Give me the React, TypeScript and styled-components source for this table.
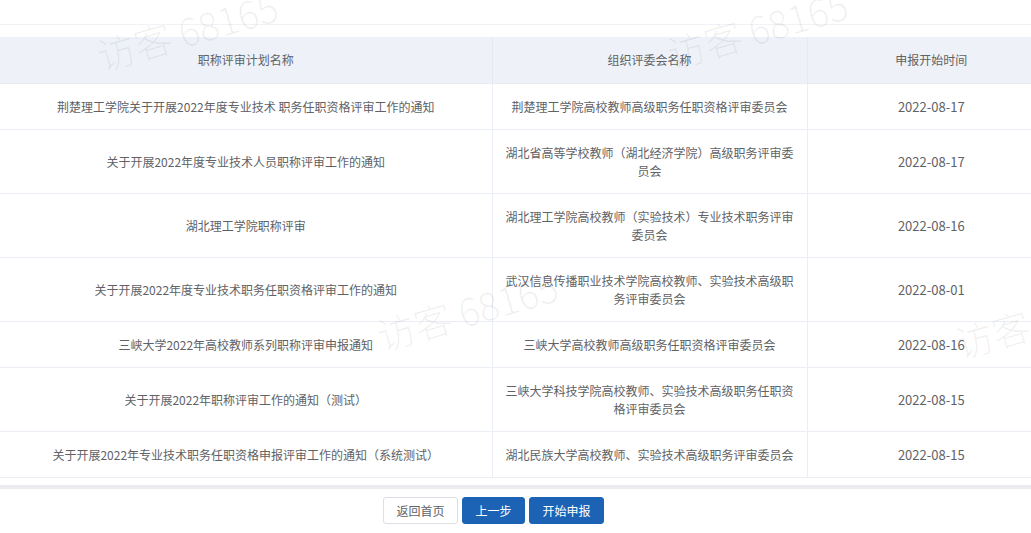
import React from "react";
import styled, { createGlobalStyle } from "styled-components";

const GlobalStyle = createGlobalStyle`
  html, body {
    margin: 0;
    padding: 0;
    background: #ffffff;
  }
  body {
    font-family: "Noto Sans CJK SC", "Noto Sans", sans-serif;
    color: #606266;
    font-size: 12px;
  }
`;

const Page = styled.div`
  position: relative;
  width: 1031px;
  height: 533px;
  overflow: hidden;
  background: #ffffff;
`;

const TopStrip = styled.div`
  height: 24px;
  border-bottom: 1px solid #f0f2f5;
  margin-bottom: 12px;
`;

const ScrollArea = styled.div`
  width: 1031px;
  overflow: hidden;
`;

const Table = styled.table`
  width: 1055px;
  border-collapse: collapse;
  table-layout: fixed;
`;

const HeadCell = styled.th<{ $last?: boolean }>`
  background: #eef2f8;
  color: #606266;
  font-weight: 400;
  font-size: 12px;
  line-height: 18px;
  padding: 14px 10px 14px;
  text-align: center;
  border-bottom: 1px solid #e9edf3;
  border-right: ${(p) => (p.$last ? "none" : "1px solid #e6eaf0")};
`;

const Cell = styled.td<{ $last?: boolean; $date?: boolean }>`
  color: #606266;
  font-size: ${(p) => (p.$date ? "13px" : "12px")};
  line-height: 18px;
  padding: 14px 10px 13px;
  text-align: center;
  vertical-align: middle;
  border-bottom: 1px solid #ebeef5;
  border-right: ${(p) => (p.$last ? "none" : "1px solid #ebeef5")};
  word-break: break-all;
`;

const ScrollTrack = styled.div`
  margin-top: 7px;
  height: 4px;
  background: #eaecef;
`;

const Actions = styled.div`
  display: flex;
  justify-content: center;
  gap: 4px;
  padding: 8px 44px 0 0;
`;

const Button = styled.button<{ $primary?: boolean; $w: number }>`
  width: ${(p) => p.$w}px;
  height: 27px;
  border-radius: 3px;
  font-family: "Noto Sans CJK SC", sans-serif;
  font-size: 12px;
  line-height: 1;
  cursor: pointer;
  padding: 0;
  border: 1px solid ${(p) => (p.$primary ? "#1d63b5" : "#dcdfe6")};
  background: ${(p) => (p.$primary ? "#1d63b5" : "#ffffff")};
  color: ${(p) => (p.$primary ? "#ffffff" : "#606266")};
`;

const WatermarkLayer = styled.div`
  position: absolute;
  inset: 0;
  pointer-events: none;
  overflow: hidden;
`;

const Watermark = styled.span<{ $x: number; $y: number }>`
  position: absolute;
  left: ${(p) => p.$x}px;
  top: ${(p) => p.$y}px;
  transform: translate(-50%, -50%) rotate(-16deg);
  white-space: nowrap;
  font-family: "Noto Sans CJK SC", sans-serif;
  font-weight: 300;
  font-size: 38px;
  color: rgba(0, 0, 0, 0.06);
`;

const rows: [string, string, string][] = [
  ["荆楚理工学院关于开展2022年度专业技术 职务任职资格评审工作的通知", "荆楚理工学院高校教师高级职务任职资格评审委员会", "2022-08-17"],
  ["关于开展2022年度专业技术人员职称评审工作的通知", "湖北省高等学校教师（湖北经济学院）高级职务评审委员会", "2022-08-17"],
  ["湖北理工学院职称评审", "湖北理工学院高校教师（实验技术）专业技术职务评审委员会", "2022-08-16"],
  ["关于开展2022年度专业技术职务任职资格评审工作的通知", "武汉信息传播职业技术学院高校教师、实验技术高级职务评审委员会", "2022-08-01"],
  ["三峡大学2022年高校教师系列职称评审申报通知", "三峡大学高校教师高级职务任职资格评审委员会", "2022-08-16"],
  ["关于开展2022年职称评审工作的通知（测试）", "三峡大学科技学院高校教师、实验技术高级职务任职资格评审委员会", "2022-08-15"],
  ["关于开展2022年专业技术职务任职资格申报评审工作的通知（系统测试）", "湖北民族大学高校教师、实验技术高级职务评审委员会", "2022-08-15"],
];

const marks = [
  { x: 187, y: 30 },
  { x: 757, y: 28 },
  { x: 467, y: 310 },
  { x: 1045, y: 318 },
];

export default function App() {
  return (
    <Page>
      <GlobalStyle />
      <TopStrip />
      <ScrollArea>
        <Table>
          <colgroup>
            <col style={{ width: 492 }} />
            <col style={{ width: 315 }} />
            <col style={{ width: 248 }} />
          </colgroup>
          <thead>
            <tr>
              <HeadCell>职称评审计划名称</HeadCell>
              <HeadCell>组织评委会名称</HeadCell>
              <HeadCell $last>申报开始时间</HeadCell>
            </tr>
          </thead>
          <tbody>
            {rows.map(([a, b, c], i) => (
              <tr key={i}>
                <Cell>{a}</Cell>
                <Cell>{b}</Cell>
                <Cell $last $date>
                  {c}
                </Cell>
              </tr>
            ))}
          </tbody>
        </Table>
      </ScrollArea>
      <ScrollTrack />
      <Actions>
        <Button $w={75}>返回首页</Button>
        <Button $primary $w={63}>上一步</Button>
        <Button $primary $w={75}>开始申报</Button>
      </Actions>
      <WatermarkLayer>
        {marks.map((m, i) => (
          <Watermark key={i} $x={m.x} $y={m.y}>
            访客 68165
          </Watermark>
        ))}
      </WatermarkLayer>
    </Page>
  );
}
